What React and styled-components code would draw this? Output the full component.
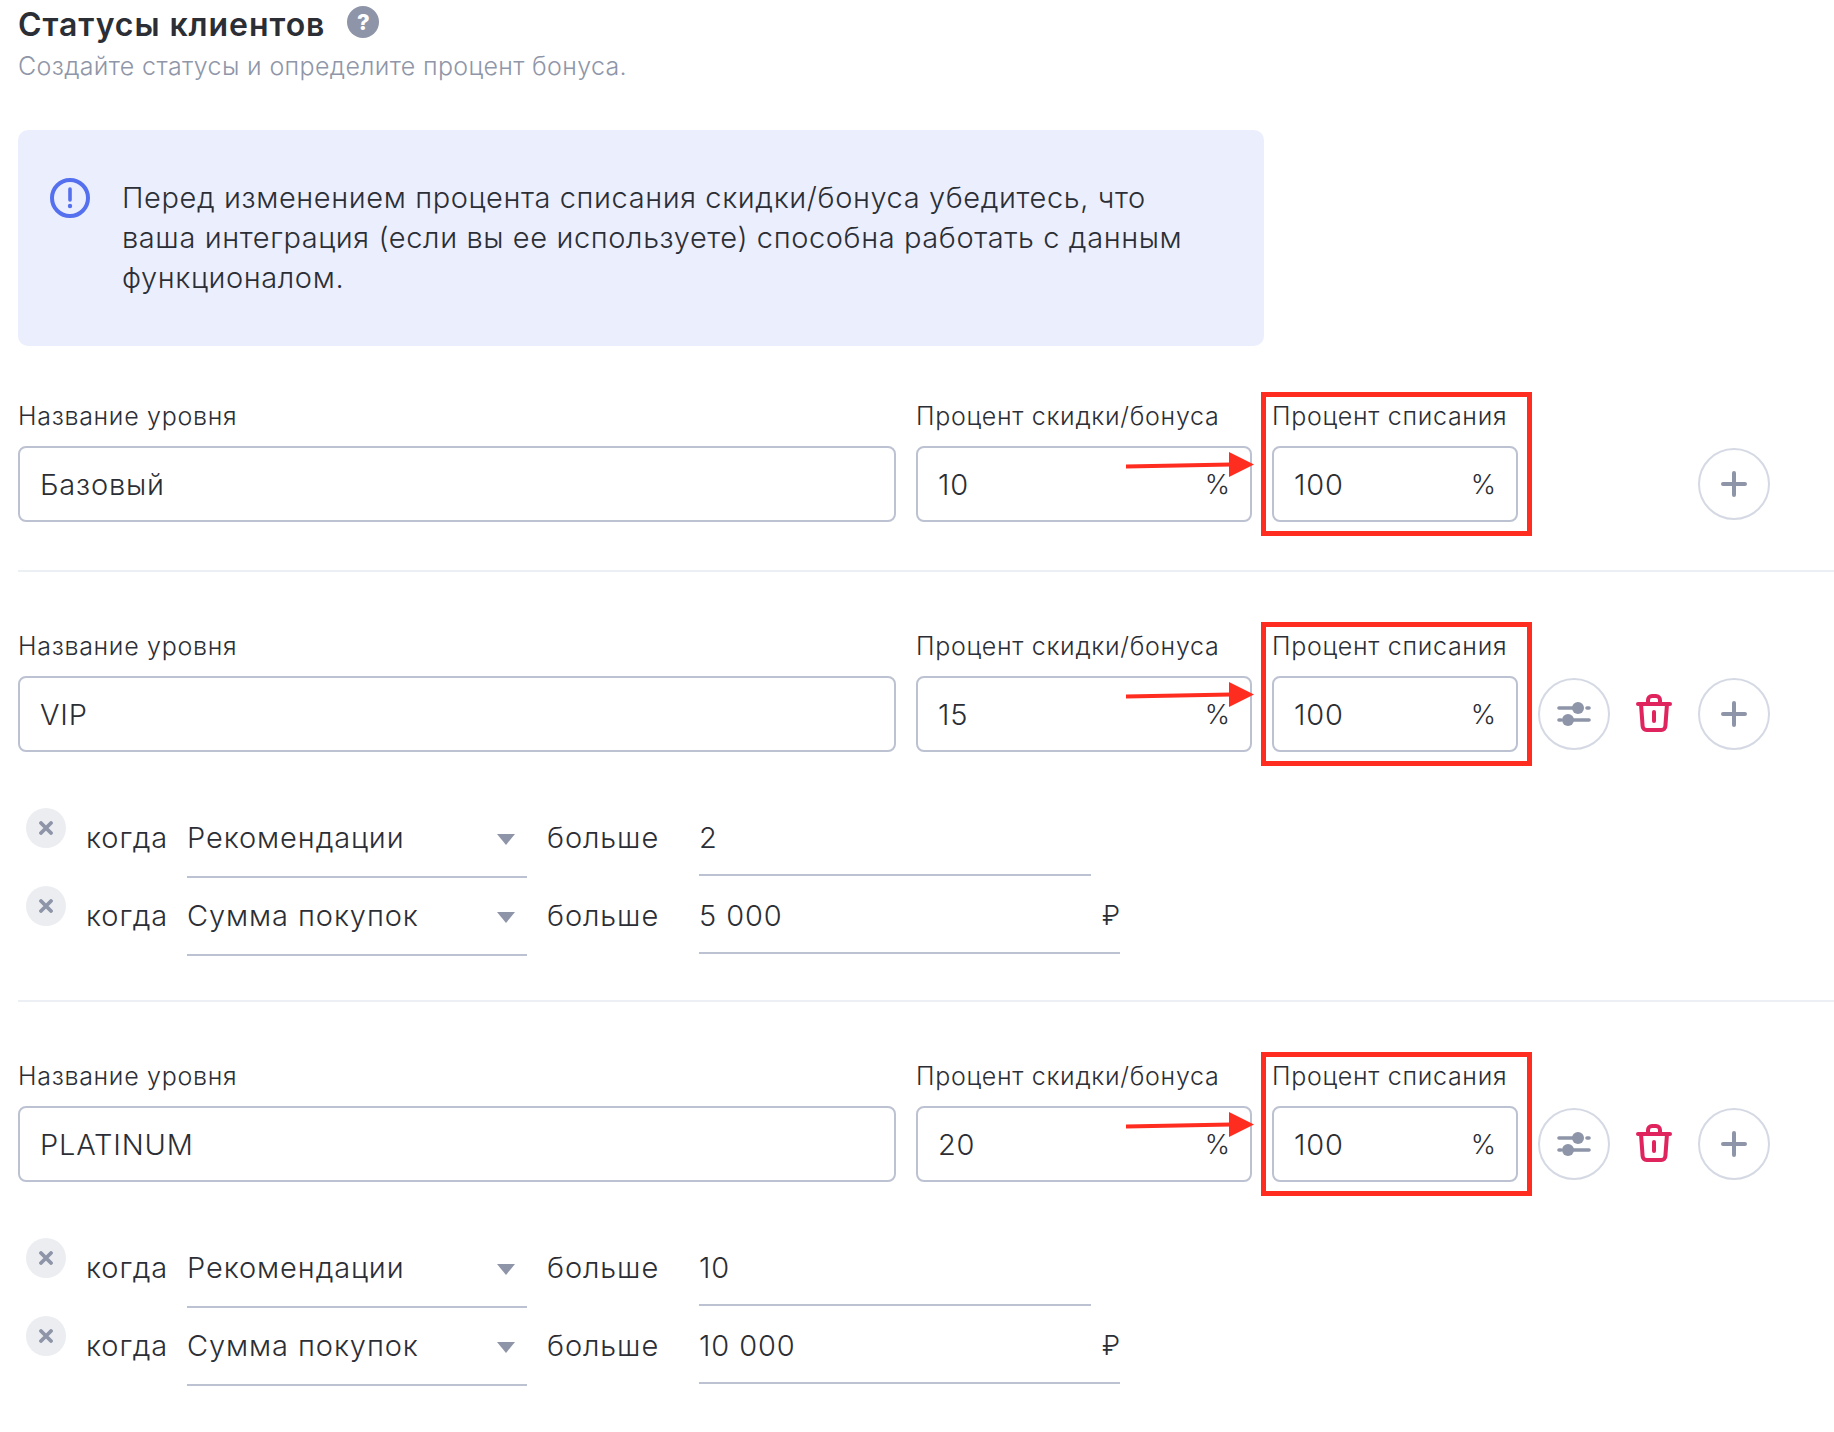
import React from "react";
import styled, { createGlobalStyle } from "styled-components";

const GlobalStyle = createGlobalStyle`
  html, body {
    margin: 0;
    padding: 0;
    background: #fff;
  }
  body {
    font-family: Inter, "Noto Sans", "Liberation Sans", sans-serif;
    color: #2c2e35;
  }
`;

const Page = styled.div`
  width: 1834px;
  height: 1432px;
  box-sizing: border-box;
  padding: 0 0 0 18px;
  overflow: hidden;
`;

const TitleRow = styled.div`
  display: flex;
  align-items: flex-start;
  gap: 22px;
  height: 50px;
`;

const Title = styled.h1`
  margin: 6px 0 0;
  font-size: 32px;
  line-height: 38px;
  font-weight: 600;
  letter-spacing: 0.95px;
  color: #2c2e35;
`;

const HelpBadge = styled.span`
  width: 32px;
  height: 32px;
  margin-top: 6px;
  border-radius: 50%;
  background: #8e95a8;
  color: #fff;
  font-size: 22px;
  font-weight: 800;
  line-height: 32px;
  text-align: center;
`;

const Subtitle = styled.p`
  margin: 0;
  font-size: 25px;
  line-height: 32px;
  font-weight: 300;
  letter-spacing: 0.35px;
  color: #8f96a8;
`;

const Notice = styled.div`
  box-sizing: border-box;
  width: 1246px;
  height: 216px;
  margin-top: 48px;
  padding: 48px 60px 0 32px;
  display: flex;
  gap: 32px;
  background: #ebeefd;
  border-radius: 10px;
`;

const NoticeText = styled.p`
  margin: 0;
  font-size: 29px;
  line-height: 40px;
  font-weight: 300;
  letter-spacing: 0.6px;
  color: #2c2e35;
`;

const Level = styled.section`
  width: 1816px;
  padding-top: ${(p) => p.$top}px;
  padding-bottom: ${(p) => p.$bottom}px;
  border-bottom: ${(p) => (p.$last ? "0" : "2px solid #eceff3")};
`;

const FieldRow = styled.div`
  display: flex;
  align-items: flex-end;
  gap: 20px;
`;

const Field = styled.div`
  position: relative;
  width: ${(p) => p.$width}px;
  flex: none;
`;

const Label = styled.div`
  font-size: 25px;
  line-height: 30px;
  font-weight: 300;
  letter-spacing: 0.7px;
  white-space: nowrap;
  color: #2c2e35;
  margin-bottom: 15px;
`;

const Box = styled.div`
  box-sizing: border-box;
  height: 76px;
  padding: 0 20px;
  display: flex;
  align-items: center;
  justify-content: space-between;
  border: 2px solid #bcc2d1;
  border-radius: 8px;
  font-size: 29px;
  font-weight: 300;
  letter-spacing: 0.8px;
`;

const Unit = styled.span`
  font-size: 27px;
  font-weight: 300;
  letter-spacing: 0;
`;

const Highlight = styled.div`
  position: absolute;
  left: -11px;
  right: -14px;
  top: -9px;
  bottom: -14px;
  border: 5px solid #ff2d20;
  pointer-events: none;
`;

const ArrowMark = styled.svg`
  position: absolute;
  left: -146px;
  top: 49px;
  width: 128px;
  height: 28px;
`;

const Actions = styled.div`
  flex: none;
  width: 232px;
  height: 76px;
  display: flex;
  align-items: center;
  justify-content: flex-end;
`;

const RoundButton = styled.button`
  flex: none;
  width: 72px;
  height: 72px;
  padding: 0;
  display: flex;
  align-items: center;
  justify-content: center;
  background: #fff;
  border: 2px solid #d5d9e4;
  border-radius: 50%;
`;

const TrashButton = styled.span`
  flex: none;
  width: 36px;
  height: 40px;
  margin: 0 26px;
  display: flex;
`;

const Conditions = styled.div`
  margin-top: 56px;
`;

const ConditionRow = styled.div`
  display: flex;
  align-items: flex-start;
  height: 78px;
  padding-left: 8px;
  font-size: 29px;
  font-weight: 300;
  letter-spacing: 0.9px;
`;

const RemoveButton = styled.span`
  flex: none;
  width: 40px;
  height: 40px;
  border-radius: 50%;
  background: #ebedf1;
  display: flex;
  align-items: center;
  justify-content: center;
`;

const Word = styled.span`
  flex: none;
  width: ${(p) => p.$width}px;
  margin-left: 20px;
  line-height: 60px;
`;

const SelectBox = styled.div`
  flex: none;
  box-sizing: border-box;
  width: 340px;
  height: 70px;
  margin-left: 21px;
  padding-right: 12px;
  display: flex;
  justify-content: space-between;
  line-height: 60px;
  border-bottom: 2px solid #bcc2d1;
`;

const Caret = styled.i`
  width: 0;
  height: 0;
  margin-top: 26px;
  border-left: 9px solid transparent;
  border-right: 9px solid transparent;
  border-top: 11px solid #8e95a8;
`;

const ValueBox = styled.div`
  flex: none;
  box-sizing: border-box;
  width: ${(p) => p.$width}px;
  height: 68px;
  margin-left: 40px;
  display: flex;
  justify-content: space-between;
  line-height: 60px;
  border-bottom: 2px solid #bcc2d1;
`;

const AlertSvg = styled.svg`
  flex: none;
`;

const AlertIcon = () => (
  <AlertSvg width="40" height="40" viewBox="0 0 40 40" fill="none">
    <circle cx="20" cy="20" r="18" stroke="#5470ee" strokeWidth="4" />
    <path d="M20 11v11" stroke="#5470ee" strokeWidth="3.6" strokeLinecap="round" />
    <circle cx="20" cy="28" r="2.2" fill="#5470ee" />
  </AlertSvg>
);

const Arrow = () => (
  <ArrowMark viewBox="0 0 128 28">
    <path d="M0 16.5L105 14.5" stroke="#ff2d20" strokeWidth="4" />
    <path d="M103 2L128 14.5L103 27Z" fill="#ff2d20" />
  </ArrowMark>
);

const TuneIcon = () => (
  <svg width="34" height="26" viewBox="0 0 34 26" fill="none">
    <path d="M2 7h19M30 7h2M2 19h2M11 19h21" stroke="#8e95a8" strokeWidth="3.6" strokeLinecap="round" />
    <circle cx="21" cy="7" r="6" fill="#8e95a8" />
    <circle cx="11" cy="19" r="6" fill="#8e95a8" />
  </svg>
);

const TrashIcon = () => (
  <svg width="36" height="40" viewBox="0 0 36 40" fill="none" stroke="#e0245e" strokeWidth="4" strokeLinecap="round" strokeLinejoin="round">
    <path d="M2 10h32" />
    <path d="M12 10V6a4 4 0 0 1 4-4h4a4 4 0 0 1 4 4v4" />
    <path d="M5 10l1.6 22a4 4 0 0 0 4 4h14.8a4 4 0 0 0 4-4L31 10" />
    <path d="M18 18v9" />
  </svg>
);

const PlusIcon = () => (
  <svg width="26" height="26" viewBox="0 0 26 26" fill="none">
    <path d="M13 2v22M2 13h22" stroke="#8e95a8" strokeWidth="4" strokeLinecap="round" />
  </svg>
);

const CrossIcon = () => (
  <svg width="14" height="14" viewBox="0 0 14 14" fill="none">
    <path d="M2 2l10 10M12 2L2 12" stroke="#8e95a8" strokeWidth="3.8" strokeLinecap="round" />
  </svg>
);

const levels = [
  { name: "Базовый", percent: "10", top: 55, bottom: 48, conditions: [] },
  {
    name: "VIP",
    percent: "15",
    top: 59,
    bottom: 36,
    conditions: [
      { type: "Рекомендации", value: "2", width: 392 },
      { type: "Сумма покупок", value: "5 000", width: 421, unit: "₽" },
    ],
  },
  {
    name: "PLATINUM",
    percent: "20",
    top: 59,
    bottom: 0,
    last: true,
    conditions: [
      { type: "Рекомендации", value: "10", width: 392 },
      { type: "Сумма покупок", value: "10 000", width: 421, unit: "₽" },
    ],
  },
];

function App() {
  return (
    <Page>
      <GlobalStyle />
      <TitleRow>
        <Title>Статусы клиентов</Title>
        <HelpBadge>?</HelpBadge>
      </TitleRow>
      <Subtitle>Создайте статусы и определите процент бонуса.</Subtitle>
      <Notice>
        <AlertIcon />
        <NoticeText>
          Перед изменением процента списания скидки/бонуса убедитесь, что
          <br />
          ваша интеграция (если вы ее используете) способна работать с данным
          <br />
          функционалом.
        </NoticeText>
      </Notice>
      {levels.map((level, i) => (
        <Level key={level.name} $top={level.top} $bottom={level.bottom} $last={level.last}>
          <FieldRow>
            <Field $width={878}>
              <Label>Название уровня</Label>
              <Box>{level.name}</Box>
            </Field>
            <Field $width={336}>
              <Label>Процент скидки/бонуса</Label>
              <Box>
                {level.percent}
                <Unit>%</Unit>
              </Box>
            </Field>
            <Field $width={246}>
              <Label>Процент списания</Label>
              <Box>
                100
                <Unit>%</Unit>
              </Box>
              <Highlight />
              <Arrow />
            </Field>
            <Actions>
              {i > 0 && (
                <>
                  <RoundButton>
                    <TuneIcon />
                  </RoundButton>
                  <TrashButton>
                    <TrashIcon />
                  </TrashButton>
                </>
              )}
              <RoundButton>
                <PlusIcon />
              </RoundButton>
            </Actions>
          </FieldRow>
          {level.conditions.length > 0 && (
            <Conditions>
              {level.conditions.map((c) => (
                <ConditionRow key={c.type}>
                  <RemoveButton>
                    <CrossIcon />
                  </RemoveButton>
                  <Word $width={80}>когда</Word>
                  <SelectBox>
                    {c.type}
                    <Caret />
                  </SelectBox>
                  <Word $width={112}>больше</Word>
                  <ValueBox $width={c.width}>
                    {c.value}
                    {c.unit && <Unit>{c.unit}</Unit>}
                  </ValueBox>
                </ConditionRow>
              ))}
            </Conditions>
          )}
        </Level>
      ))}
    </Page>
  );
}

export default App;
